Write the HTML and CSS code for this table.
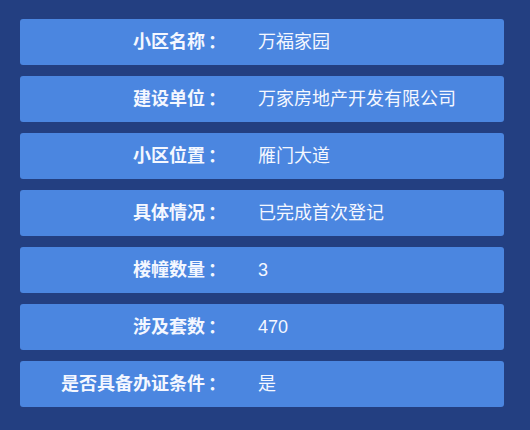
FILE: index.html
```html
<!DOCTYPE html>
<html lang="zh">
<head>
<meta charset="utf-8">
<link rel="stylesheet" href="styles.css">
</head>
<body>
<div class="list">
  <div class="row"><div class="label">小区名称<span class="colon">：</span></div><div class="value">万福家园</div></div>
  <div class="row"><div class="label">建设单位<span class="colon">：</span></div><div class="value">万家房地产开发有限公司</div></div>
  <div class="row"><div class="label">小区位置<span class="colon">：</span></div><div class="value">雁门大道</div></div>
  <div class="row"><div class="label">具体情况<span class="colon">：</span></div><div class="value">已完成首次登记</div></div>
  <div class="row"><div class="label">楼幢数量<span class="colon">：</span></div><div class="value">3</div></div>
  <div class="row"><div class="label">涉及套数<span class="colon">：</span></div><div class="value">470</div></div>
  <div class="row"><div class="label">是否具备办证条件<span class="colon">：</span></div><div class="value">是</div></div>
</div>
</body>
</html>
```
FILE: styles.css
```css
html, body {
  margin: 0;
  padding: 0;
  background: #233f81;
  width: 530px;
  height: 430px;
}
.list {
  display: flex;
  flex-direction: column;
  gap: 11px;
  padding: 19px 26px 0 20px;
}
.row {
  display: flex;
  align-items: center;
  height: 46px;
  background: #4b86e0;
  border-radius: 3px;
  color: #f4f7ff;
  font-family: "Liberation Sans", "Noto Sans CJK SC", sans-serif;
  font-size: 18px;
  line-height: 24px;
}
.label {
  width: 203px;
  text-align: right;
  font-weight: bold;
  white-space: nowrap;
}
.colon {
  display: inline-block;
  width: 18px;
  padding-left: 3px;
  box-sizing: border-box;
  text-align: left;
  white-space: nowrap;
}
.value {
  margin-left: 35px;
}
```
